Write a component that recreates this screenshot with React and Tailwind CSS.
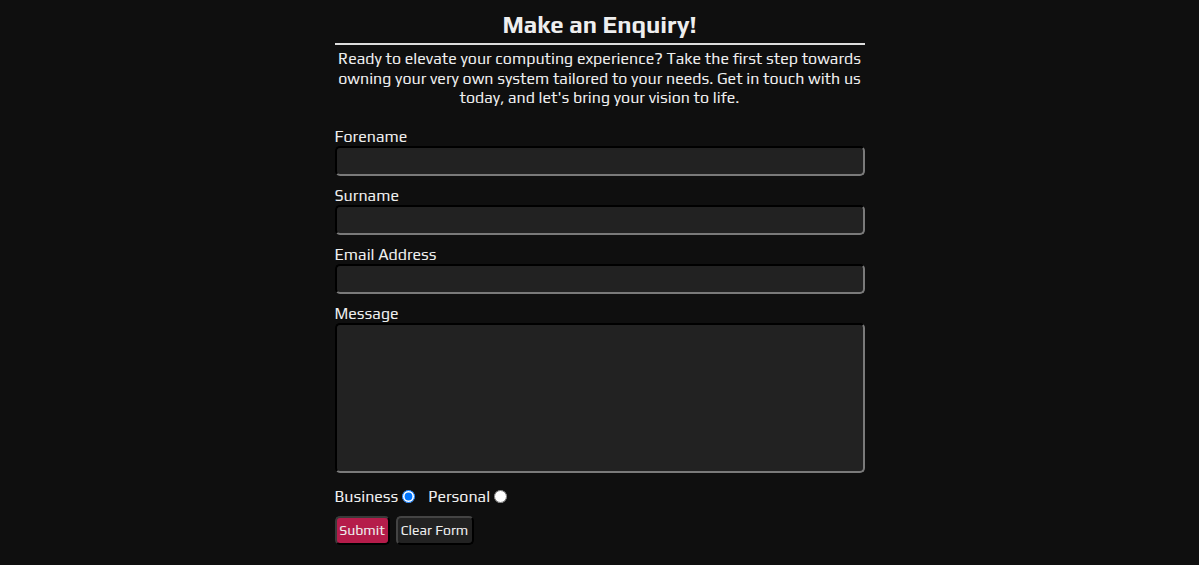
import React, { useState } from "react";

const Field = ({ label, textarea }) => (
    <div className="flex flex-col">
        <label className="text-[16px] leading-[19px] text-[#eeeeee]">{label}</label>
        {textarea ? (
            <textarea className="h-[150px] w-full resize-none rounded-[5px] border-2 border-t-black border-l-black border-b-[#7a7a7a] border-r-[#7a7a7a] bg-[#222222] text-white outline-none" />
        ) : (
            <input
                type="text"
                className="h-[30px] w-full rounded-[5px] border-2 border-t-black border-l-black border-b-[#7a7a7a] border-r-[#7a7a7a] bg-[#222222] text-white outline-none"
            />
        )}
    </div>
);

export default function App() {
    const [kind, setKind] = useState("business");

    return (
        <div
            className="min-h-[565px] w-full bg-[#0f0f0f] text-[#eeeeee]"
            style={{ fontFamily: "Play, 'Noto Sans', 'DejaVu Sans', sans-serif" }}
        >
            <div className="mx-auto w-[530px] pt-[9px]">
                <h1 className="text-center text-[24px] font-bold leading-[32px]">Make an Enquiry!</h1>
                <div className="mt-[2px] h-[2px] bg-[#dddddd]" />
                <p className="mt-[4px] text-center text-[16px] leading-[19.5px]">
                    Ready to elevate your computing experience? Take the first step towards owning your very own
                    system tailored to your needs. Get in touch with us today, and let's bring your vision to life.
                </p>

                <form className="mt-[19px] flex flex-col gap-[10px]" onSubmit={(e) => e.preventDefault()}>
                    <Field label="Forename" />
                    <Field label="Surname" />
                    <Field label="Email Address" />
                    <Field label="Message" textarea />

                    <div className="mt-[4px] flex items-center text-[16px] leading-[19px]">
                        <label className="flex items-center">
                            Business
                            <input
                                type="radio"
                                name="kind"
                                checked={kind === "business"}
                                onChange={() => setKind("business")}
                                className="ml-[4px] h-[13px] w-[13px]"
                            />
                        </label>
                        <label className="ml-[13px] flex items-center">
                            Personal
                            <input
                                type="radio"
                                name="kind"
                                checked={kind === "personal"}
                                onChange={() => setKind("personal")}
                                className="ml-[4px] h-[13px] w-[13px]"
                            />
                        </label>
                    </div>

                    <div className="flex gap-[6px]">
                        <button
                            type="submit"
                            className="h-[29px] w-[55px] rounded-[5px] border-2 border-t-[#3a3a3a] border-l-[#3a3a3a] border-b-black border-r-black bg-[#b51c4a] text-[14px] text-[#eeeeee]"
                        >
                            Submit
                        </button>
                        <button
                            type="reset"
                            className="h-[29px] w-[78px] rounded-[5px] border-2 border-t-[#444444] border-l-[#444444] border-b-black border-r-black bg-[#222222] text-[14px] text-[#eeeeee]"
                        >
                            Clear Form
                        </button>
                    </div>
                </form>
            </div>
        </div>
    );
}
